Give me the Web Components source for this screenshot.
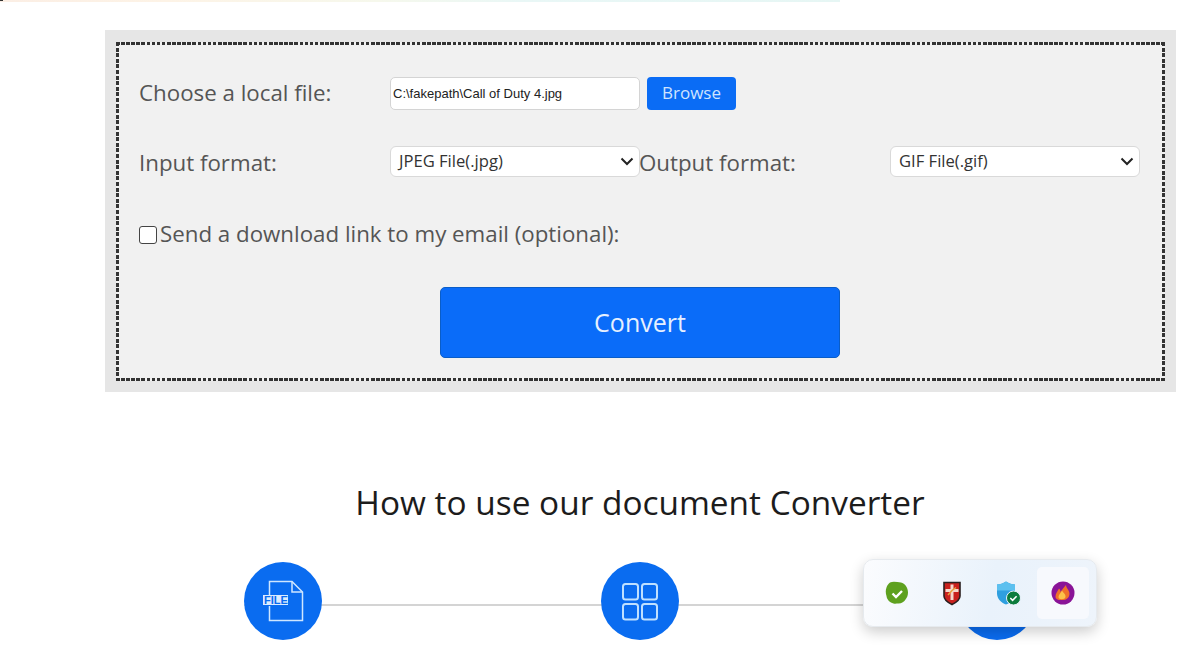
<!DOCTYPE html>
<html lang="en"><head><meta charset="utf-8"><title>Converter</title>
<style>
html,body{margin:0;padding:0;background:#fff;height:645px;overflow:hidden}
body{font-family:"Open Sans",sans-serif;position:relative}
</style></head><body>
<x-topstrip></x-topstrip>
<x-panel>
  <x-row style="--h:33px;--top:32px;--lab:-3px">
    <x-label>Choose a local file:</x-label>
    <x-file value="C:\fakepath\Call of Duty 4.jpg">Browse</x-file>
  </x-row>
  <x-row style="--h:31px;--top:37px;--lab:-1px">
    <x-label>Input format:</x-label>
    <x-select>JPEG File(.jpg)</x-select>
    <x-label>Output format:</x-label>
    <x-select>GIF File(.gif)</x-select>
  </x-row>
  <x-check>Send a download link to my email (optional):</x-check>
  <x-convert>Convert</x-convert>
</x-panel>
<x-heading>How to use our document Converter</x-heading>
<x-steps></x-steps>
<x-tray></x-tray>
<script>
function def(name,html,init){
  customElements.define(name,class extends HTMLElement{
    constructor(){super();this.attachShadow({mode:'open'}).innerHTML=html}
    connectedCallback(){if(init)init(this)}
  });
}
def('x-topstrip',`<style>:host{display:block;height:2px;width:840px;background:linear-gradient(#333,#333) 0 0/3px 1px no-repeat,linear-gradient(90deg,#fbeee4 0,#fdf3e6 20%,#f6f8ec 45%,#e9f7f6 62%,#e6f6f4 100%)}</style>`);
def('x-panel',`<style>:host{display:block;box-sizing:border-box;width:1071px;height:362px;margin:28px 0 0 105px;padding:12px 11px 11px;background:#e6e6e6}
.in{box-sizing:border-box;height:339px;padding:3px 24px;
background:
repeating-linear-gradient(90deg,#333 0 3.600px,transparent 3.600px 5.100px) 0 0/100% 3px no-repeat,
repeating-linear-gradient(90deg,#333 0 3.600px,transparent 3.600px 5.100px) 0 100%/100% 3px no-repeat,
repeating-linear-gradient(180deg,#333 0 4px,transparent 4px 5.600px) 0 0/3px 100% no-repeat,
repeating-linear-gradient(180deg,#333 0 4px,transparent 4px 5.600px) 100% 0/3px 100% no-repeat,
#f1f1f1}</style><div class="in"><slot></slot></div>`);
def('x-row',`<style>:host{display:grid;grid-template-columns:repeat(4,250px);align-items:center;height:var(--h);margin-top:var(--top);color:#555}</style><slot></slot>`);
def('x-label',`<style>:host{display:block;margin-left:-1px;margin-top:var(--lab);font:22.3px/31px "Open Sans",sans-serif;color:#555;white-space:nowrap}</style><slot></slot>`);
def('x-file',`<style>:host{display:flex;align-items:center;gap:7px;grid-column:span 2}
.f{box-sizing:border-box;width:250px;height:33px;background:#fff;border:1px solid #d4d4d4;border-radius:5px;padding:0 2px;font:13px/31px "Liberation Sans",sans-serif;color:#222;white-space:nowrap}
.b{box-sizing:border-box;width:89px;height:33px;margin-top:-1px;background:#0a6cf5;border-radius:4px;color:#cfe4ff;font:500 17px/32px "Open Sans",sans-serif;text-align:center}</style>
<div class="f" id="f"></div><div class="b"><slot></slot></div>`,e=>{e.shadowRoot.getElementById('f').textContent=e.getAttribute('value')});
def('x-select',`<style>:host{display:flex;box-sizing:border-box;width:250px;height:31px;margin-top:-3px;align-items:center;justify-content:space-between;background:#fff;border:1px solid #d9d9d9;border-radius:6px;padding:0 4px 1px 8px;font:16.6px/28px "Open Sans",sans-serif;color:#333}
svg{width:16px;height:16px;flex:none}</style><slot></slot><svg viewBox="0 0 16 16"><path d="M2.500 5.500 8 11l5.500-5.500" fill="none" stroke="#222" stroke-width="2"/></svg>`);
def('x-check',`<style>:host{display:flex;align-items:center;height:31px;margin:40px 0 0 -1px;font:22.3px/31px "Open Sans",sans-serif;color:#555;white-space:nowrap}
i{box-sizing:border-box;width:18px;height:18px;margin:3px 3px 0 0;border:1.500px solid #444;border-radius:3px;background:#fff;flex:none}</style><i></i><slot></slot>`);
def('x-convert',`<style>:host{display:block;box-sizing:border-box;width:400px;height:71px;margin:38px 0 0 300px;background:#0a6cf9;border:1px solid #0a5dc8;border-radius:5px;color:#e6f0ff;font:25px/68px "Open Sans",sans-serif;text-align:center}</style><slot></slot>`);
def('x-heading',`<style>:host{display:block;width:1120px;margin:87px 0 0 80px;text-align:center;font:33.4px/46px "Open Sans",sans-serif;color:#1c1c1c;white-space:nowrap}</style><slot></slot>`);
def('x-steps',`<style>:host{display:block;position:relative;box-sizing:border-box;width:792px;height:78px;margin:37px 0 0 244px}
.wrap{display:flex;justify-content:space-between;align-items:center;height:78px;background:linear-gradient(#d4d4d4,#d4d4d4) 0 42px/100% 2px no-repeat}
.c{width:78px;height:78px;border-radius:50%;background:#0a6cf0;display:flex;align-items:center;justify-content:center;flex:none}
svg{display:block}
text{font:700 11px "Liberation Sans",sans-serif;fill:#0a6cf0}
</style><div class="wrap">
<div class="c"><svg width="44" height="44" viewBox="0 0 44 44" fill="none" stroke="#cfe6ff" stroke-width="1.500">
<path d="M8.500 16V2.500h22.500l10.500 10.500v28.500h-33V27"/><path d="M31 2.500v10.500h10.500"/>
<rect x="2" y="16" width="25" height="10" fill="#dcecff" stroke="none"/><text x="3" y="25" stroke="none">FILE</text></svg></div>
<div class="c"><svg width="38" height="40" viewBox="0 0 38 40" fill="none" stroke="#bfe0ff" stroke-width="2">
<rect x="2" y="3" width="15" height="15.500" rx="2.500"/><rect x="21" y="3" width="15" height="15.500" rx="2.500"/><rect x="2" y="23" width="15" height="15.500" rx="2.500"/><rect x="21" y="23" width="15" height="15.500" rx="2.500"/></svg></div>
<div class="c"></div></div>`);
def('x-tray',`<style>:host{position:absolute;left:863px;top:559px;box-sizing:border-box;width:234px;height:68px;padding:9px 7px;display:flex;justify-content:space-between;align-items:center;border-radius:10px;border:1px solid #e6eaee;background:linear-gradient(100deg,#fbfcfe 0,#e9f2fb 55%,#eef4fb 100%);box-shadow:0 5px 14px rgba(0,0,0,.2)}
.t{width:52px;height:52px;border-radius:5px;display:flex;align-items:center;justify-content:center}
.on{background:#f7f9fd}</style>
<div class="t"><svg width="24" height="24" viewBox="0 0 24 24"><path d="M5 1.500C8 0 12 1 16 1.500c4 1 7 5 7 10 0 3-1 5-2.500 7-1 2-4 4-7 4-2 0-3 .5-5 0C5 21.500 2 19 1.500 15 .5 12 .5 9 1.500 6.500 2 4.500 3.500 2.500 5 1.500Z" fill="#5ea11f"/><path d="M7.500 12.500l3.500 3.500 6-6" fill="none" stroke="#fff" stroke-width="2.400"/></svg></div>
<div class="t"><svg width="20" height="25" viewBox="0 0 20 25"><path d="M2 1.500h16v13.500c0 4-4 6.500-8 8.500-4-2-8-4.500-8-8.500Z" fill="#c9211e" stroke="#2a2020" stroke-width="1.600"/><path d="M10 3.500v15.500M3.500 9.500h13" stroke="#f4d8cc" stroke-width="3"/><path d="M6 14l4-4.500 4-3" stroke="#e8a23c" stroke-width="1.500" fill="none"/></svg></div>
<div class="t"><svg width="26" height="26" viewBox="0 0 26 26"><path d="M11 1.500c3 2 6 3 9 3v9c0 5-4 9-9 11-5-2-9-6-9-11v-9c3 0 6-1 9-3Z" fill="#2f9fdf"/><path d="M11 1.500c3 2 6 3 9 3v6H2v-6c3 0 6-1 9-3Z" fill="#5cc0ef"/><circle cx="18.500" cy="18" r="7" fill="#0c7c3c" stroke="#e9f2fb" stroke-width="1"/><path d="M15.300 18l2.300 2.300 4-4" fill="none" stroke="#fff" stroke-width="1.600"/></svg></div>
<div class="t on"><svg width="24" height="24" viewBox="0 0 24 24"><circle cx="12" cy="12" r="11.500" fill="#8a1497"/><path d="M4.500 15.500c0-3 2-5 3.500-8 1 1 1.500 2 1.500 3.500 1.500-2.500 4-5 5.500-7 0 2.500 2 4 3 6.500 1.500 3.500-.5 8-5.500 8.500C8 19.500 4.500 18.500 4.500 15.500Z" fill="#f0702a"/><path d="M7.500 16c0-2.500 2.500-4 3.500-6.500 1 2.500 4 3.500 3.500 6.500-.5 3-7 3-7 0Z" fill="#fcc24a"/></svg></div>`);
</script>
</body></html>
